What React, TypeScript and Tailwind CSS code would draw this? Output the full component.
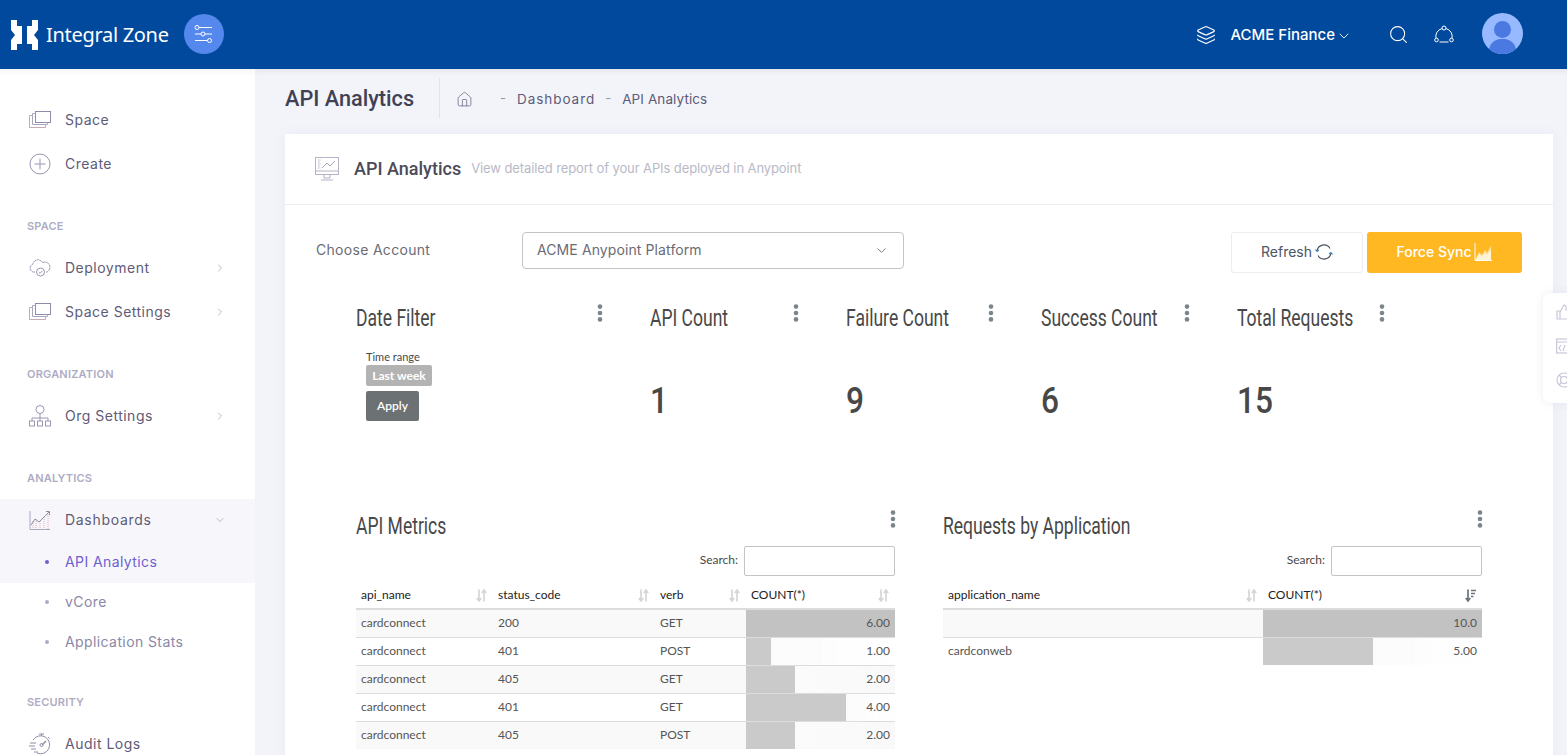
import React from 'react';
import { ChevronDown, ChevronRight, Home, Layers, Search } from 'lucide-react';

// no condensed family on the box, so the widget titles are Roboto squeezed sideways
const heading = "origin-left scale-x-[0.73] whitespace-nowrap font-['Roboto',sans-serif] text-[24px] leading-[28px] text-[#484848]";

// Line icons from the sidebar and header, thin strokes like the original set
const SpaceIcon = () => (
  <svg width="22" height="18" viewBox="0 0 22 18" fill="none" stroke="#a9a6bf" strokeWidth="1">
    <rect x="6.5" y="0.5" width="15" height="11" stroke="#8f8ca8" />
    <path d="M6.5 2.5H3.5V13.5H18.5V11.5" />
    <path d="M3.5 4.5H0.5V16.5H16.5V13.5" stroke="#c6a9b8" />
  </svg>
);

const PlusCircle = () => (
  <svg width="22" height="22" viewBox="0 0 22 22" fill="none" stroke="#9a97b3" strokeWidth="1">
    <circle cx="11" cy="11" r="10" />
    <path d="M11 5.5V16.5M5.5 11H16.5" />
  </svg>
);

const CloudCheck = () => (
  <svg width="22" height="18" viewBox="0 0 22 18" fill="none" stroke="#9a97b3" strokeWidth="1">
    <path d="M6 13H4.5A4 4 0 0 1 4 5.2 5 5 0 0 1 13.5 3.6 4.5 4.5 0 0 1 18 13H17" strokeDasharray="3 0.6" />
    <circle cx="11.5" cy="13" r="4" />
    <path d="M9.7 13L11 14.3L13.4 11.8" />
  </svg>
);

const OrgIcon = () => (
  <svg width="22" height="22" viewBox="0 0 22 22" fill="none" stroke="#9a97b3" strokeWidth="1">
    <circle cx="11" cy="4.5" r="4" />
    <path d="M11 8.5V13M3 16V13H19V16M11 13V16" />
    <rect x="0.5" y="16" width="5" height="5" />
    <rect x="8.5" y="16" width="5" height="5" />
    <rect x="16.5" y="16" width="5" height="5" />
  </svg>
);

const ChartIcon = () => (
  <svg width="22" height="21" viewBox="0 0 22 21" fill="none" strokeWidth="1">
    <path d="M1 1V19.5H21" stroke="#a9a6bf" />
    <path d="M4 11V19M7 9V19M11 11V19M15 7V19M19 4V19" stroke="#e2aeb8" strokeDasharray="1 1" />
    <path d="M2 15L6 9L10 12L20 2M17 1.5H20.5V5" stroke="#8f8ca8" />
  </svg>
);

const StopwatchIcon = () => (
  <svg width="22" height="22" viewBox="0 0 22 22" fill="none" stroke="#8f8ca8" strokeWidth="1">
    <path d="M4 7A9 9 0 1 1 8 20" />
    <path d="M10 1H15M12.5 1V3M19 4L20.5 5.5" />
    <path d="M13 12L17 8" strokeWidth="1.5" />
    <circle cx="12.5" cy="12" r="1.5" />
    <path d="M1 10H7M0 13H6M2 16H7M5 19H9" />
  </svg>
);

const MonitorIcon = () => (
  <svg width="24" height="24" viewBox="0 0 24 24" fill="none" stroke="#b5b3c6" strokeWidth="1">
    <rect x="0.5" y="0.5" width="23" height="17" />
    <path d="M0.5 14H23.5" />
    <path d="M7 11L12 6L15 9L20 4" stroke="#a9a6bf" />
    <path d="M3 3H6M3 5H5M3 7H6M3 9H5M3 11H6" strokeDasharray="1 0.5" />
    <path d="M9 18V21H15V18M6 23H18" />
  </svg>
);

const SlidersIcon = () => (
  <svg width="20" height="18" viewBox="0 0 20 18" fill="none" stroke="white" strokeWidth="1">
    <circle cx="3" cy="2.5" r="2" />
    <path d="M5 2.5H18" />
    <circle cx="9" cy="9" r="2" />
    <path d="M1 9H7M11 9H18" />
    <circle cx="15.5" cy="15.5" r="2" />
    <path d="M1 15.5H13.5" />
  </svg>
);

const NetworkIcon = () => (
  <svg width="20" height="20" viewBox="0 0 20 20" fill="none" stroke="white" strokeWidth="1">
    <circle cx="10" cy="3" r="2" />
    <circle cx="2.5" cy="15" r="1.8" />
    <circle cx="17.5" cy="15" r="1.8" />
    <path d="M8 3.6A8 8 0 0 0 2 13.2M12 3.6A8 8 0 0 1 18 13.2M5.5 17H14.5" />
  </svg>
);

const LogoMark = () => (
  <svg width="30" height="30" viewBox="0 0 30 30" fill="white">
    <path d="M0 0H6V6H11V24H6V30H0V20L4 15L0 10Z" />
    <path d="M21 0H27V10L23 15L27 20V30H21V24H16V6H21Z" />
  </svg>
);

const RefreshIcon = () => (
  <svg width="18" height="18" viewBox="0 0 18 18" fill="none" stroke="#4b5563" strokeWidth="1.2">
    <path d="M2 8A7 7 0 0 1 15 5.5" />
    <path d="M16 10A7 7 0 0 1 3 12.5" />
    <path d="M0.5 6.5L2 8.5L4 7M17.5 11.5L16 9.5L14 11" stroke="#3b82c4" />
  </svg>
);

const SyncChart = () => (
  <svg width="18" height="18" viewBox="0 0 18 18" fill="none">
    <path d="M1 0V17.5H18" stroke="white" strokeWidth="1" />
    <path d="M2 16L5 9L8 12L11 7L13 10L17 3V17H2Z" fill="#fde2a8" />
    <path d="M2 16L5 11L8 14L11 10L13 12L17 7V17H2Z" fill="#fff3d6" />
  </svg>
);

const SortIcon = ({ active }: { active?: boolean }) => (
  <svg width="11" height="13" viewBox="0 0 11 13" fill="none" strokeWidth="1.7">
    <path d="M3 0.5V11.5M0.8 9L3 12L5.2 9" stroke={active ? '#6b7280' : '#d6d6d6'} />
    {active ? (
      <path d="M6 1.5H11M6 4.5H10M6 7.5H8.5" stroke="#6b7280" />
    ) : (
      <path d="M8 12.5V1.5M5.8 4L8 1L10.2 4" stroke="#d6d6d6" />
    )}
  </svg>
);

const Kebab = () => (
  <svg width="6" height="18" viewBox="0 0 6 18" fill="#7b868c" className="block">
    <circle cx="3" cy="2.6" r="2.3" />
    <circle cx="3" cy="9" r="2.3" />
    <circle cx="3" cy="15.4" r="2.3" />
  </svg>
);

const NavItem = ({ icon, label, chevron }: { icon: React.ReactNode; label: string; chevron?: boolean }) => (
  <div className="flex h-11 items-center px-[29px]">
    <span className="flex w-[36px] items-center">{icon}</span>
    <span className="flex-1 pb-[2px] text-[14px] tracking-[0.5px] text-[#5e5b78]">{label}</span>
    {chevron && <ChevronRight size={12} strokeWidth={1.2} className="text-[#8f8ca8]" />}
  </div>
);

const NavLabel = ({ children, className }: { children: string; className: string }) => (
  <div className={`flex h-5 items-center pl-[27px] text-[11px] font-semibold tracking-[0.2px] text-[#aeacc4] ${className}`}>
    {children}
  </div>
);

const SubItem = ({ label, active }: { label: string; active?: boolean }) => (
  <div className={`flex items-center pl-[45px] ${active ? 'h-[42px]' : 'h-10 pb-[2px]'}`}>
    <span className={`mr-[16px] h-1 w-1 rounded-full ${active ? 'bg-[#6d5fd0]' : 'bg-[#aeacc4]'}`} />
    <span className={`pb-[2px] text-[14px] tracking-[0.4px] ${active ? 'text-[#6d5fd0]' : 'text-[#8a88a6]'}`}>{label}</span>
  </div>
);

const Sidebar = () => (
  <aside className="w-[255px] shrink-0 bg-white pt-[29px] shadow-[inset_0_8px_8px_-8px_rgba(0,0,0,0.08)]">
    <NavItem icon={<SpaceIcon />} label="Space" />
    <NavItem icon={<PlusCircle />} label="Create" />
    <NavLabel className="mt-[30px] mb-[10px]">SPACE</NavLabel>
    <NavItem icon={<CloudCheck />} label="Deployment" chevron />
    <NavItem icon={<SpaceIcon />} label="Space Settings" chevron />
    <NavLabel className="mt-[30px] mb-[10px]">ORGANIZATION</NavLabel>
    <NavItem icon={<OrgIcon />} label="Org Settings" chevron />
    <NavLabel className="mt-[30px] mb-[11px]">ANALYTICS</NavLabel>
    <div className="bg-[#f7f7fb]">
      <div className="flex h-[42px] items-center px-[29px]">
        <span className="flex w-[36px] items-center">
          <ChartIcon />
        </span>
        <span className="flex-1 pb-[2px] text-[14px] tracking-[0.7px] text-[#5e5b78]">Dashboards</span>
        <ChevronDown size={12} strokeWidth={1.2} className="text-[#8f8ca8]" />
      </div>
      <SubItem label="API Analytics" active />
    </div>
    <SubItem label="vCore" />
    <SubItem label="Application Stats" />
    <NavLabel className="mt-[29px] mb-[10px]">SECURITY</NavLabel>
    <NavItem icon={<StopwatchIcon />} label="Audit Logs" />
  </aside>
);

const Stat = ({ title, value }: { title: string; value: string }) => (
  <div className="w-[195.6px] shrink-0">
    <div className="flex items-start">
      <h3 className={`w-[142.5px] ${heading}`}>{title}</h3>
      <Kebab />
    </div>
    <div className="mt-[46px] origin-left scale-x-[0.88] font-['Roboto',sans-serif] text-[36px] font-medium leading-[46px] text-[#484848]">{value}</div>
  </div>
);

type Column = { name: string; width: number; active?: boolean };
type Row = { cells: string[]; count: string; pct: number };

const DataTable = ({ title, columns, rows }: { title: string; columns: Column[]; rows: Row[] }) => (
  <div className="w-[539px] shrink-0 font-['Lato',sans-serif]">
    <div className="flex items-start justify-between">
      <h3 className={heading}>{title}</h3>
      <span className="-mt-[2px] mr-[-1px]">
        <Kebab />
      </span>
    </div>
    <div className="mt-[6px] flex items-center justify-end">
      <span className="mr-[6px] pb-[2px] text-[12px] text-[#484848]">Search:</span>
      <input className="h-[30px] w-[151px] rounded-[2px] border border-[#c4c4c4] bg-white" aria-label="Search" />
    </div>
    <table className="mt-[8px] w-full table-fixed border-collapse text-[12px] text-[#555555]">
      <colgroup>
        {columns.map((c) => (
          <col key={c.name} style={{ width: c.width }} />
        ))}
      </colgroup>
      <thead>
        <tr className="h-[25px] border-b-2 border-[#dcdcdc] text-[#222222]">
          {columns.map((c) => (
            <th key={c.name} className="px-[5px] pb-[2px] text-left font-normal">
              <div className="flex items-center justify-between pr-[1px]">
                <span>{c.name}</span>
                <SortIcon active={c.active} />
              </div>
            </th>
          ))}
        </tr>
      </thead>
      <tbody>
        {rows.map((r, i) => (
          <tr key={i} className={`h-[28px] border-b border-[#dddddd] last:border-b-0 ${i % 2 === 0 ? 'bg-[#f9f9f9]' : 'bg-white'}`}>
            {r.cells.map((c, j) => (
              <td key={j} className="px-[5px]">
                {c}
              </td>
            ))}
            <td
              className="px-[5px] text-right"
              style={{
                // bar length comes from the row's value
                background: `linear-gradient(to right, ${r.pct === 100 ? '#c2c2c2' : '#cacaca'} ${r.pct}%, #fbfbfb ${r.pct}%, transparent 100%)`,
              }}
            >
              {r.count}
            </td>
          </tr>
        ))}
      </tbody>
    </table>
  </div>
);

const metricsRows: Row[] = [
  { cells: ['cardconnect', '200', 'GET'], count: '6.00', pct: 100 },
  { cells: ['cardconnect', '401', 'POST'], count: '1.00', pct: 17 },
  { cells: ['cardconnect', '405', 'GET'], count: '2.00', pct: 33 },
  { cells: ['cardconnect', '401', 'GET'], count: '4.00', pct: 67 },
  { cells: ['cardconnect', '405', 'POST'], count: '2.00', pct: 33 },
];

const appRows: Row[] = [
  { cells: [''], count: '10.0', pct: 100 },
  { cells: ['cardconweb'], count: '5.00', pct: 50 },
];

export default function App() {
  return (
    <div className="relative flex h-[755px] flex-col overflow-hidden bg-[#f3f4fa] font-['Inter',sans-serif]">
      <header className="flex h-[69px] shrink-0 items-center bg-[#00499c] pl-[11px] pr-[44px] text-white">
        <LogoMark />
        <span className="ml-[5px] font-['Noto_Sans',sans-serif] text-[20px] tracking-[-0.3px]">Integral Zone</span>
        <span className="ml-[15px] -mt-[1px] flex h-10 w-10 items-center justify-center rounded-full bg-[#5588ec]">
          <SlidersIcon />
        </span>
        <div className="ml-auto flex items-center">
          <Layers size={20} strokeWidth={1.4} />
          <span className="ml-[15px] mt-[2px] text-[15px] font-medium">ACME Finance</span>
          <ChevronDown size={16} strokeWidth={1.3} className="ml-[1px] mt-[3px]" />
          <Search size={21} strokeWidth={1.2} className="ml-[36px]" />
          <span className="ml-[25px] flex">
            <NetworkIcon />
          </span>
          <span className="relative ml-[28px] -mt-[2px] h-[41px] w-[41px] overflow-hidden rounded-full bg-[#96b9ff]">
            <span className="absolute left-[12px] top-[8px] h-[17px] w-[17px] rounded-full bg-[#4a79e2]" />
            <span className="absolute left-[7px] top-[26px] h-[24px] w-[27px] rounded-full bg-[#4a79e2]" />
          </span>
        </div>
      </header>

      <div className="flex min-h-0 flex-1">
        <Sidebar />
        <main className="min-w-0 flex-1 pl-[30px] pr-[14px] shadow-[inset_0_8px_8px_-8px_rgba(0,0,0,0.1)]">
          <div className="flex h-[65px] items-center pb-[5px]">
            <h1 className="w-[154px] font-['Roboto',sans-serif] text-[21.7px] font-medium text-[#3f4254]">API Analytics</h1>
            <span className="-mt-[3px] h-10 w-px bg-[#e1e2ea]" />
            <Home size={17} strokeWidth={1} className="ml-[16px] text-[#5e5b78]" />
            <span className="ml-[27px] text-[13px] text-[#9a97b3]">-</span>
            <span className="ml-[11px] text-[13.5px] tracking-[0.95px] text-[#5e5b78]">Dashboard</span>
            <span className="ml-[10px] text-[13px] text-[#9a97b3]">-</span>
            <span className="ml-[11px] text-[13.5px] tracking-[0.1px] text-[#5e5b78]">API Analytics</span>
          </div>

          <section className="h-[700px] bg-white shadow-[0_0_12px_rgba(80,80,140,0.06)]">
            <div className="flex h-[71px] items-center border-b border-[#ebedf3] pl-[30px]">
              <MonitorIcon />
              <span className="ml-[15px] pb-[2px] font-['Roboto',sans-serif] text-[18px] font-medium text-[#4b4b58]">API Analytics</span>
              <span className="ml-[10px] text-[13px] tracking-[-0.1px] text-[#b9b9c6]">View detailed report of your APIs deployed in Anypoint</span>
            </div>

            <div className="flex px-[31px] pt-[27px]">
              <span className="mt-[7px] w-[206px] text-[14px] tracking-[0.3px] text-[#6b6b76]">Choose Account</span>
              <div className="flex h-[37px] w-[382px] items-center justify-between rounded-[4px] border border-[#c4c4c8] px-[14px] text-[14px] tracking-[0.1px] text-[#6b6b76]">
                <span className="pb-[2px]">ACME Anypoint Platform</span>
                <ChevronDown size={15} strokeWidth={1.2} className="text-[#555555]" />
              </div>
              <button className="ml-auto flex h-[41px] w-[132px] items-center justify-center gap-[3px] rounded-[3px] border border-[#ebedf3] bg-white pb-[2px] text-[14px] text-[#4b5563]">
                Refresh <RefreshIcon />
              </button>
              <button className="ml-[4px] flex h-[41px] w-[155px] items-center justify-center gap-[3px] rounded-[3px] bg-[#ffb822] pb-[2px] text-[14px] font-medium text-white">
                Force Sync <SyncChart />
              </button>
            </div>

            <div className="mt-[31px] flex pl-[71px]">
              <div className="w-[294px] shrink-0">
                <div className="flex items-start">
                  <h3 className={`w-[241px] ${heading}`}>Date Filter</h3>
                  <Kebab />
                </div>
                <div className="mt-[18px] pl-[10px] font-['Lato',sans-serif]">
                  <div className="text-[11px] leading-[13px] text-[#484848]">Time range</div>
                  <span className="mt-[2px] flex h-[21px] w-[66px] items-center justify-center rounded-[2px] bg-[#b3b3b3] text-[12px] font-bold text-white">Last week</span>
                  <button className="mt-[5px] flex h-[30px] w-[53px] items-center justify-center rounded-[2px] bg-[#6c7274] text-[12px] font-semibold text-white">Apply</button>
                </div>
              </div>
              <Stat title="API Count" value="1" />
              <Stat title="Failure Count" value="9" />
              <Stat title="Success Count" value="6" />
              <Stat title="Total Requests" value="15" />
            </div>

            <div className="mt-[88px] flex gap-[48px] pl-[71px]">
              <DataTable
                title="API Metrics"
                rows={metricsRows}
                columns={[
                  { name: 'api_name', width: 137 },
                  { name: 'status_code', width: 162 },
                  { name: 'verb', width: 91 },
                  { name: 'COUNT(*)', width: 149 },
                ]}
              />
              <DataTable
                title="Requests by Application"
                rows={appRows}
                columns={[
                  { name: 'application_name', width: 320 },
                  { name: 'COUNT(*)', width: 219, active: true },
                ]}
              />
            </div>
          </section>
        </main>
      </div>

      {/* floating quick actions, cut off by the window edge */}
      <div className="absolute left-[1543px] top-[293px] flex h-[110px] w-[40px] flex-col gap-[18px] rounded-l-[8px] bg-white pl-[13px] pt-[11px] shadow-[0_0_10px_rgba(80,80,140,0.1)]">
        <svg width="16" height="16" viewBox="0 0 16 16" fill="none" stroke="#c9c7d8" strokeWidth="1.2">
          <path d="M1 7H4V15H1ZM4 8L8 1L10 2V6H15V15H4" />
        </svg>
        <svg width="16" height="16" viewBox="0 0 16 16" fill="none" stroke="#c9c7d8" strokeWidth="1.2">
          <rect x="0.6" y="1" width="15" height="14" />
          <path d="M1 4H15M5 7L3 10L5 13M11 7L13 10L11 13M9 7L7 13" />
        </svg>
        <svg width="16" height="16" viewBox="0 0 16 16" fill="none" stroke="#c9c7d8" strokeWidth="1.2">
          <circle cx="8" cy="8" r="7" />
          <circle cx="8" cy="8" r="3.5" />
          <path d="M3 3L5.5 5.5M13 3L10.5 5.5M3 13L5.5 10.5M13 13L10.5 10.5" />
        </svg>
      </div>
    </div>
  );
}
